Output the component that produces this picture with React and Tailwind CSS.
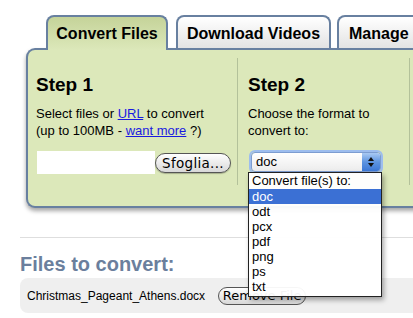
import React from "react";

const formats = ["doc", "odt", "pcx", "pdf", "png", "ps", "txt"];

const App = () => {
  return (
    <div className="w-[413px] h-[318px] overflow-hidden bg-white relative font-['Liberation_Sans',Arial,sans-serif] text-black">
      {/* tabs */}
      <div className="pt-[15px]">
        <div className="flex items-start h-[33px] pl-[46px] w-[520px]">
          <div className="relative z-10 shrink-0 whitespace-nowrap w-[122px] h-[35px] border-2 border-b-0 border-[#6880a0] rounded-t-[8px] bg-gradient-to-b from-[#c5d399] to-[#dce8ba] text-center pt-[7px] text-[16px] leading-[20px] font-bold">
            Convert Files
          </div>
          <div className="ml-[8px] shrink-0 whitespace-nowrap w-[155px] h-[33px] border-2 border-b-0 border-[#6880a0] rounded-t-[8px] bg-gradient-to-b from-white to-[#e3e3e3] text-center pt-[7px] text-[16px] leading-[20px] font-bold">
            Download Videos
          </div>
          <div className="ml-[6px] shrink-0 whitespace-nowrap w-[110px] h-[33px] border-2 border-b-0 border-[#6880a0] rounded-t-[8px] bg-gradient-to-b from-white to-[#e3e3e3] pl-[10px] pt-[7px] text-[16px] leading-[20px] font-bold">
            Manage
          </div>
        </div>

        {/* panel */}
        <div className="ml-[26px] w-[420px] h-[160px] border-2 border-r-0 border-[#6880a0] rounded-l-[9px] bg-[#dce8ba] shadow-[0_3px_4px_rgba(0,0,0,0.35)] flex">
          <div className="w-[209px] mt-[8px] pl-[8px] pt-[16px]">
            <h2 className="text-[19px] leading-[22px] font-bold">Step 1</h2>
            <p className="mt-[9px] text-[13px] leading-[17px]">
              Select files or{" "}
              <span className="text-[#1a1ae0] underline">URL</span> to convert
              <br />
              (up to 100MB -{" "}
              <span className="text-[#1a1ae0] underline">want more</span> ?)
            </p>
            <div className="mt-[12px] flex items-center">
              <div className="ml-[1px] w-[118px] h-[23px] bg-white" />
              <button className="w-[76px] h-[20px] rounded-full border border-[#555] bg-gradient-to-b from-white to-[#d8d8d8] shadow-[0_1px_1px_rgba(0,0,0,0.25)] font-['DejaVu_Sans',sans-serif] text-[13.5px] leading-[18px] tracking-[0.3px]">
                Sfoglia...
              </button>
            </div>
          </div>

          <div className="w-[172px] mt-[8px] h-[127px] border-l border-[#b3c19a] pl-[10px] pt-[16px]">
            <h2 className="text-[19px] leading-[22px] font-bold">Step 2</h2>
            <p className="mt-[9px] text-[13px] leading-[17px]">
              Choose the format to
              <br />
              convert to:
            </p>
            <div className="relative mt-[13px] ml-[3px] w-[130px] h-[20px] rounded-[4px] border border-[#7d9dd0] shadow-[0_0_0_2px_#9dbdee] bg-gradient-to-b from-white to-[#ececec] flex">
              <span className="pl-[4px] text-[13px] leading-[18px]">doc</span>
              <div className="ml-auto w-[18px] h-full rounded-r-[3px] bg-gradient-to-b from-[#a9c9f2] via-[#5d94e0] to-[#3c78d6] flex flex-col items-center justify-center gap-[2px]">
                <svg width="6" height="4" viewBox="0 0 6 4">
                  <path d="M3 0 L6 4 L0 4 Z" fill="#111" />
                </svg>
                <svg width="6" height="4" viewBox="0 0 6 4">
                  <path d="M0 0 L6 0 L3 4 Z" fill="#111" />
                </svg>
              </div>

              {/* open dropdown */}
              <div className="absolute z-20 left-[-4px] top-[19px] w-[134px] border border-[#222] bg-white/95 shadow-[2px_3px_5px_rgba(0,0,0,0.35)] text-[13px] leading-[15px] pb-[2px]">
                <div className="px-[3px] h-[16px]">Convert file(s) to:</div>
                {formats.map((f) => (
                  <div
                    key={f}
                    className={
                      f === "doc"
                        ? "px-[3px] h-[15px] bg-[#3b70d4] text-white"
                        : "px-[3px] h-[15px]"
                    }
                  >
                    {f}
                  </div>
                ))}
              </div>
            </div>
          </div>

          <div className="flex-1 mt-[8px] h-[127px] border-l border-[#b3c19a]" />
        </div>
      </div>

      {/* files to convert */}
      <div className="ml-[20px] mt-[29px] border-t border-[#dedede]" />
      <h3 className="ml-[20px] mt-[14px] text-[20px] leading-[24px] font-bold text-[#6b7f9d]">
        Files to convert:
      </h3>
      <div className="ml-[20px] mt-[2px] h-[35px] rounded-l-[8px] bg-[#efefef] flex items-center pl-[7px]">
        <span className="text-[12px] leading-[16px]">Christmas_Pageant_Athens.docx</span>
        <button className="ml-[13px] w-[88px] h-[18px] rounded-full border border-[#555] bg-gradient-to-b from-white to-[#d8d8d8] font-['DejaVu_Sans',sans-serif] text-[13px] leading-[16px]">
          Remove File
        </button>
      </div>
    </div>
  );
};

export default App;
